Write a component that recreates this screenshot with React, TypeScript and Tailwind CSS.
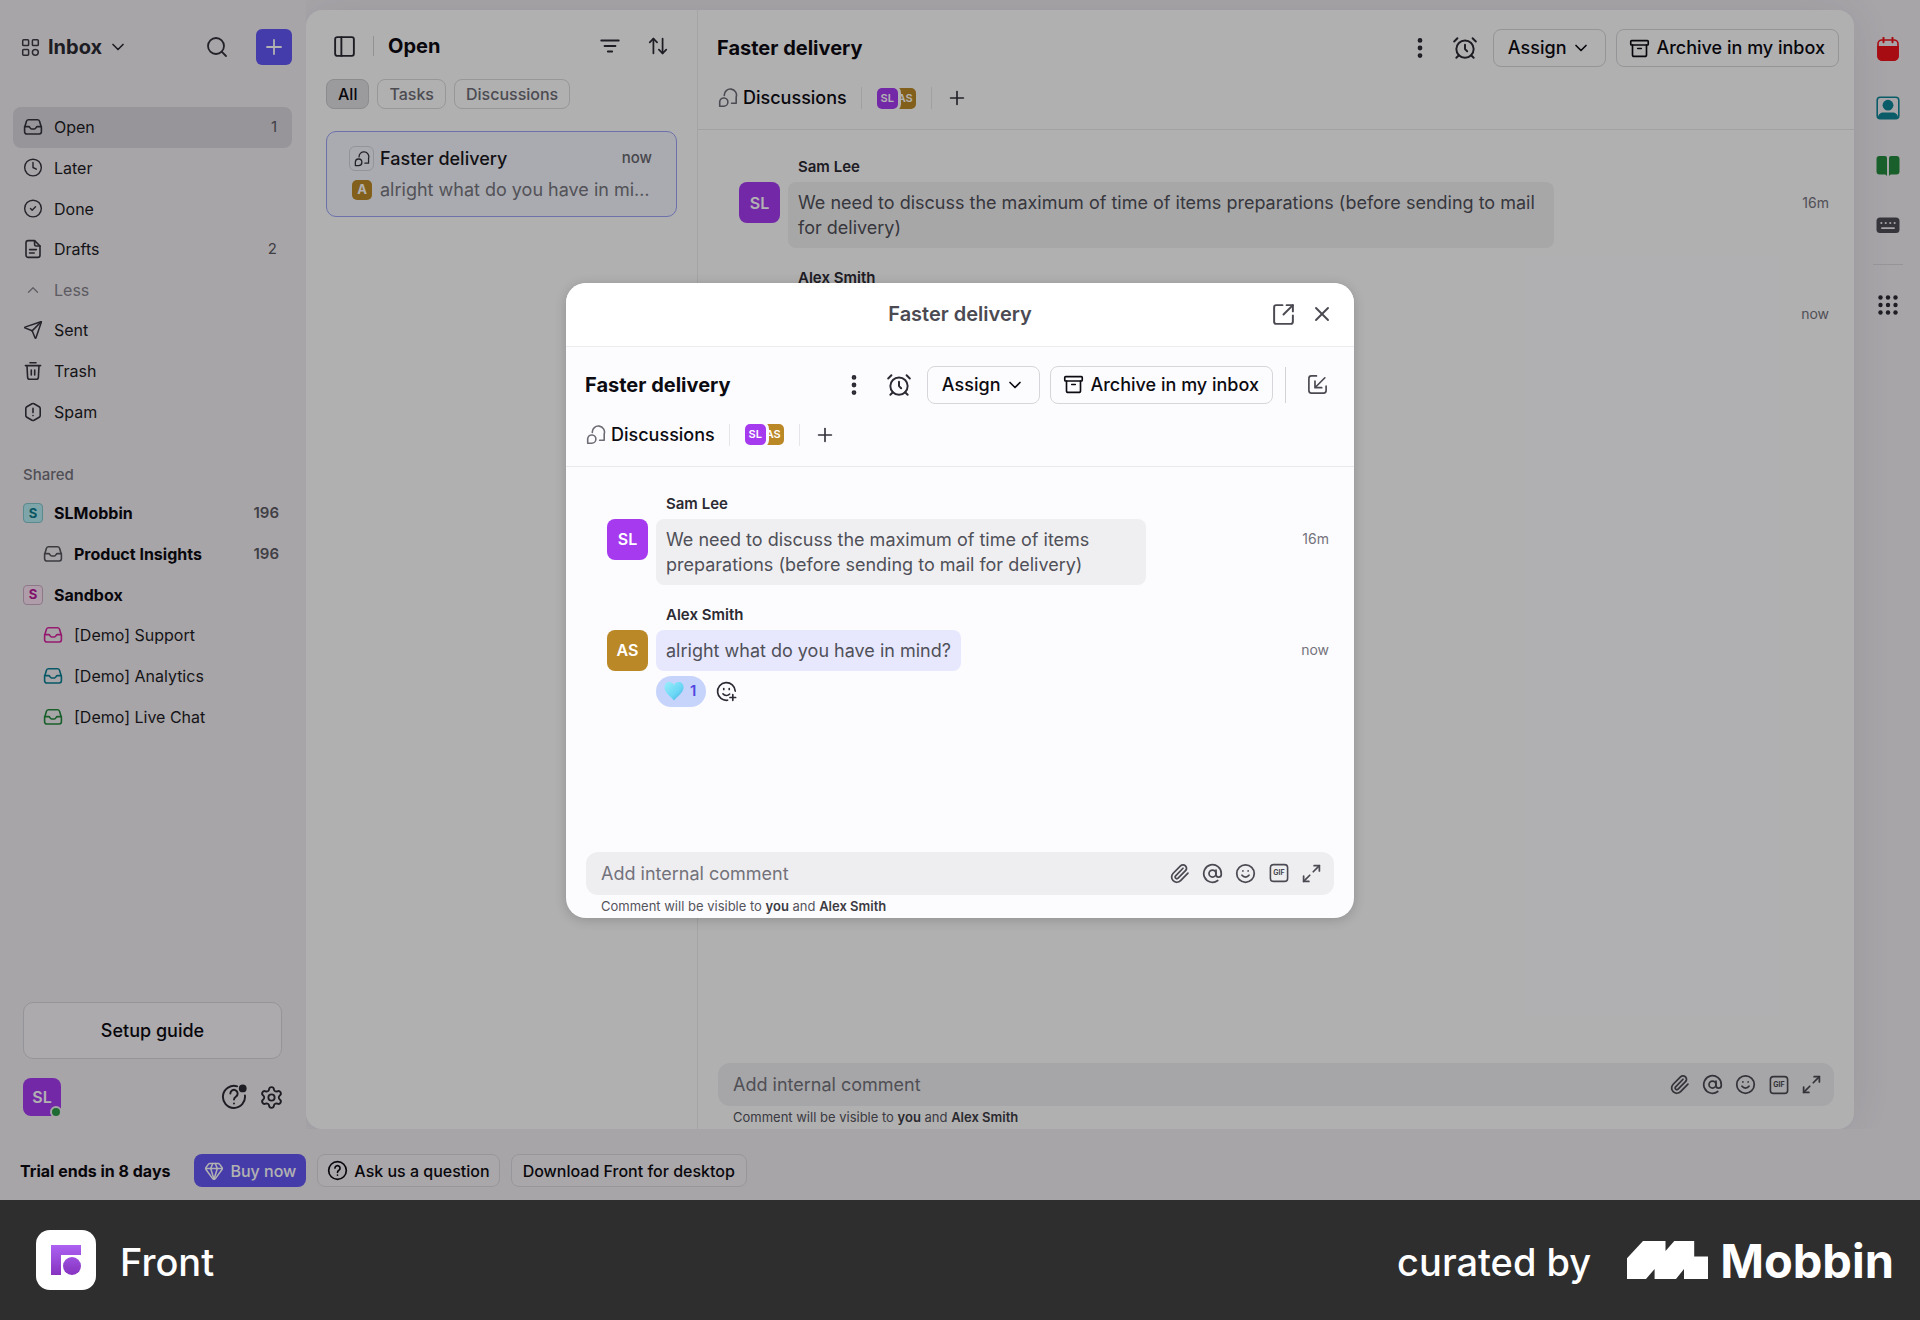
import React, { useId } from "react";
import type { ReactNode } from "react";
import {
  AlarmClock,
  Archive,
  ArrowUpDown,
  AtSign,
  ChevronDown,
  ChevronUp,
  CircleCheck,
  Clock,
  EllipsisVertical,
  Gem,
  Maximize2,
  PanelLeft,
  Paperclip,
  Plus,
  Search,
  Send,
  Settings,
  Smile,
  SquareArrowOutUpRight,
  X,
} from "lucide-react";

type GlyphProps = { size?: number; className?: string; children?: ReactNode };

function Glyph({ size = 20, className = "", children }: GlyphProps) {
  return (
    <svg
      width={size}
      height={size}
      viewBox="0 0 20 20"
      fill="none"
      stroke="currentColor"
      strokeWidth="1.6"
      strokeLinecap="round"
      strokeLinejoin="round"
      aria-hidden="true"
      className={`shrink-0 ${className}`}
    >
      {children}
    </svg>
  );
}

const TrayIcon = (p: GlyphProps) => (
  <Glyph {...p}>
    <path d="M1.6 10.4 3.4 4.5A2.1 2.1 0 0 1 5.400 2.700h9.200a2.100 2.100 0 0 1 2 1.800l1.800 5.900v4.400a2.200 2.200 0 0 1-2.200 2.200H3.800a2.200 2.200 0 0 1-2.200-2.200Z" />
    <path d="M1.6 9.600h4.100c1.300 0 1.200 2.400 2.900 2.400h2.800c1.700 0 1.600-2.400 2.900-2.400h4.100" />
  </Glyph>
);

const DraftIcon = (p: GlyphProps) => (
  <Glyph {...p}>
    <path d="M11.6 1.6H5.2A2.2 2.2 0 0 0 3 3.8v12.4a2.2 2.2 0 0 0 2.2 2.2h9.6a2.2 2.2 0 0 0 2.2-2.2V7Z" />
    <path d="M11.6 1.8v3.6A1.6 1.6 0 0 0 13.2 7H17M6.6 10.6h6.8M6.6 14h4.6" />
  </Glyph>
);

const TrashIcon = (p: GlyphProps) => (
  <Glyph {...p}>
    <path d="M2.4 4.6h15.2M7 1.8h6M4 4.8l.6 11.4a2.2 2.2 0 0 0 2.2 2.1h6.4a2.2 2.2 0 0 0 2.2-2.1L16 4.8M8.3 9v5M11.7 9v5" />
  </Glyph>
);

const SpamIcon = (p: GlyphProps) => (
  <Glyph {...p}>
    <path d="M9 1.8a2 2 0 0 1 2 0l5.2 3a2 2 0 0 1 1 1.7v7a2 2 0 0 1-1 1.7l-5.2 3a2 2 0 0 1-2 0l-5.2-3a2 2 0 0 1-1-1.7v-7a2 2 0 0 1 1-1.7Z" />
    <path d="M10 6.4v4.2M10 13.5v.1" />
  </Glyph>
);

const AppsIcon = (p: GlyphProps) => (
  <Glyph {...p}>
    <rect x="1.8" y="1.8" width="6.2" height="6.2" rx="1" />
    <rect x="12" y="1.8" width="6.2" height="6.2" rx="1" />
    <rect x="1.8" y="12" width="6.2" height="6.2" rx="1" />
    <circle cx="15.1" cy="15.1" r="3.1" />
  </Glyph>
);

const FilterIcon = (p: GlyphProps) => (
  <Glyph {...p}>
    <path d="M2 5h16M5 10h10M8 15h4" />
  </Glyph>
);

const ChatIcon = (p: GlyphProps) => (
  <Glyph {...p}>
    <path d="M6.3 7.4a6.1 6.1 0 1 1 11.9 1.6v6.2h-4.6" />
    <path d="M1.7 18.2v-4.600a4.100 4.100 0 1 1 4.100 4.600Z" />
  </Glyph>
);

const HelpIcon = ({ badge, ...p }: GlyphProps & { badge?: boolean }) => (
  <Glyph {...p}>
    {badge ? (
      <>
        <path d="M12.400 1.800A8.500 8.500 0 1 0 18.400 8.800" strokeWidth="1.5" />
        <circle cx="16.700" cy="3.400" r="3" fill="currentColor" stroke="none" />
        <path d="M7.200 7.300a2.800 2.800 0 1 1 4.400 2.300c-1 .7-1.600 1.200-1.600 2.300M10 14.900v.1" strokeWidth="1.5" />
      </>
    ) : (
      <>
        <circle cx="10" cy="10" r="8.4" />
        <path d="M7.6 7.7a2.4 2.4 0 1 1 3.8 2c-.9.6-1.4 1-1.4 2M10 14.300v.1" />
      </>
    )}
  </Glyph>
);

const PopInIcon = (p: GlyphProps) => (
  <Glyph {...p}>
    <path d="M9 1.800H4.200a2.400 2.400 0 0 0-2.400 2.400v11.600a2.400 2.400 0 0 0 2.400 2.400h11.600a2.400 2.400 0 0 0 2.400-2.400V11.600" />
    <path d="M17 3.600 8 12.600M7.600 6.800V13H14" />
  </Glyph>
);

const GifIcon = (p: GlyphProps) => (
  <Glyph {...p}>
    <rect x="1.4" y="1.6" width="17.2" height="16.8" rx="3" />
    <text
      x="10"
      y="12.4"
      textAnchor="middle"
      fontSize="7"
      fontWeight="700"
      fill="currentColor"
      stroke="none"
    >
      GIF
    </text>
  </Glyph>
);

const AddReactionIcon = (p: GlyphProps) => (
  <Glyph {...p}>
    <path d="M18.3 9.6A8.4 8.4 0 1 0 11 18.3" />
    <path d="M6.6 12.2a4.2 4.2 0 0 0 6.4.2M7.4 7.2v.9M12.6 7.2v.9M16 13v5.4M13.3 15.7h5.4" />
  </Glyph>
);

function HeartIcon() {
  const id = useId();
  return (
    <svg width="20" height="20" viewBox="0 0 20 20" aria-hidden="true" className="shrink-0">
      <defs>
        <linearGradient id={id} x1="0" y1="0" x2="1" y2="1">
          <stop offset="0" stopColor="#9aeefb" />
          <stop offset="0.6" stopColor="#6ad6f5" />
          <stop offset="1" stopColor="#3fa9dc" />
        </linearGradient>
      </defs>
      <path
        d="M10 19.400C7.400 16 .4 12 .4 6.200.4 3 2.600 1 5.200 1c2 0 3.900 1.200 4.800 3.100C10.900 2.200 12.800 1 14.800 1c2.600 0 4.800 2 4.800 5.200 0 5.800-7 9.800-9.600 13.200Z"
        fill={`url(#${id})`}
      />
    </svg>
  );
}

type Tone = "purple" | "gold";
const tones: Record<Tone, string> = { purple: "bg-[#a53aef]", gold: "bg-[#bb8828]" };

const iconButton = "flex shrink-0 items-center justify-center";

type NavRow = { label: string; icon: ReactNode; count?: number; active?: boolean; muted?: boolean };

const mailRows: NavRow[] = [
  { label: "Open", icon: <TrayIcon />, count: 1, active: true },
  { label: "Later", icon: <Clock size={21} strokeWidth={1.7} /> },
  { label: "Done", icon: <CircleCheck size={21} strokeWidth={1.7} /> },
  { label: "Drafts", icon: <DraftIcon />, count: 2 },
  { label: "Less", icon: <ChevronUp size={18} strokeWidth={1.8} />, muted: true },
  { label: "Sent", icon: <Send size={20} strokeWidth={1.8} /> },
  { label: "Trash", icon: <TrashIcon /> },
  { label: "Spam", icon: <SpamIcon /> },
];

type SharedRow = {
  label: string;
  badge?: string;
  tray?: string;
  count?: number;
  bold?: boolean;
};

const sharedRows: SharedRow[] = [
  { label: "SLMobbin", badge: "border-[#82c4cc] bg-[#b5ecf2] text-[#0f7c8c]", count: 196, bold: true },
  { label: "Product Insights", tray: "text-[#55555c]", count: 196, bold: true },
  { label: "Sandbox", badge: "border-[#c9adc3] bg-[#fbe3f4] text-[#b8189a]", bold: true },
  { label: "[Demo] Support", tray: "text-[#d6249f]" },
  { label: "[Demo] Analytics", tray: "text-[#0b7f94]" },
  { label: "[Demo] Live Chat", tray: "text-[#23883c]" },
];

function Sidebar() {
  return (
    <aside className="relative z-10 flex w-[306px] shrink-0 flex-col bg-[#f0edf1] pr-[14px] pl-[13px]">
      <header className="flex h-[94px] items-center">
        <button type="button" className="flex items-center pl-2">
          <AppsIcon size={19} className="text-[#3f3d46]" />
          <span className="ml-2 text-xl font-bold text-[#2c2a33]">Inbox</span>
          <ChevronDown size={20} strokeWidth={2} className="ml-1.5 text-[#2c2a33]" />
        </button>
        <button type="button" aria-label="Search" className={`${iconButton} ml-auto size-9`}>
          <Search size={24} strokeWidth={1.8} className="text-[#33313a]" />
        </button>
        <button
          type="button"
          aria-label="Compose"
          className={`${iconButton} ml-[21px] size-9 rounded-md bg-[#6457f5] text-white`}
        >
          <Plus size={24} strokeWidth={1.8} />
        </button>
      </header>

      <nav aria-label="Mailboxes" className="mt-[13px]">
        <ul className="grid h-[325px] grid-rows-8">
          {mailRows.map((row) => (
            <li key={row.label} className="flex">
              <a
                href="#"
                className={`flex w-full items-center rounded-lg pr-[15px] pl-2.5 ${row.active ? "bg-[#d8d6dd]" : ""}`}
              >
                <span
                  className={`flex w-5 justify-center ${row.muted ? "text-[#8b8992]" : "text-[#36343d]"}`}
                >
                  {row.icon}
                </span>
                <span
                  className={`ml-[11px] text-base ${row.muted ? "text-[#85838c]" : "text-[#1e1c24]"}`}
                >
                  {row.label}
                </span>
                {row.count !== undefined && (
                  <span className="ml-auto text-[15px] text-[#5c5a63]">{row.count}</span>
                )}
              </a>
            </li>
          ))}
        </ul>
      </nav>

      <h2 className="mt-[33px] pl-2.5 text-[15px] leading-5 font-medium text-[#74727b]">Shared</h2>
      <nav aria-label="Shared" className="mt-2">
        <ul className="grid h-[244px] grid-rows-6">
          {sharedRows.map((row) => (
            <li key={row.label} className="flex">
              <a
                href="#"
                className={`flex w-full items-center pr-[13px] ${row.tray ? "pl-[30px]" : "pl-2.5"}`}
              >
                {row.badge && (
                  <span
                    className={`flex size-5 items-center justify-center rounded border text-[13px] font-bold ${row.badge}`}
                  >
                    S
                  </span>
                )}
                {row.tray && <TrayIcon className={row.tray} />}
                <span
                  className={`ml-[11px] text-base ${row.bold ? "font-bold text-[#0d0b12]" : "text-[#1e1c24]"}`}
                >
                  {row.label}
                </span>
                {row.count !== undefined && (
                  <span className="ml-auto text-[15px] font-semibold text-[#5c5a63]">{row.count}</span>
                )}
              </a>
            </li>
          ))}
        </ul>
      </nav>

      <div className="mt-auto mr-2.5 mb-[13px] ml-2.5">
        <button
          type="button"
          className="h-[57px] w-full rounded-[10px] border border-[#d6d4da] bg-[#f6f4f8] text-lg font-medium text-[#0d0b12]"
        >
          Setup guide
        </button>
        <div className="mt-[19px] flex items-center">
          <button
            type="button"
            className="relative flex size-[38px] items-center justify-center rounded-lg bg-[#a53aef] text-base font-semibold text-white"
          >
            SL
            <span className="absolute -right-px -bottom-0.5 size-3 rounded-full border-2 border-[#f0edf1] bg-[#2c9a4b]" />
          </button>
          <button type="button" aria-label="Help" className={`${iconButton} ml-auto`}>
            <HelpIcon badge size={26} className="text-[#2c2a33]" />
          </button>
          <button type="button" aria-label="Settings" className={`${iconButton} ml-3 -mr-0.5`}>
            <Settings size={25} strokeWidth={1.8} className="text-[#2c2a33]" />
          </button>
        </div>
      </div>
    </aside>
  );
}

function ConversationList() {
  return (
    <section
      aria-label="Open conversations"
      className="w-[392px] shrink-0 border-r border-[#ebebee] pr-5 pl-5"
    >
      <header className="flex h-[72px] items-center">
        <button type="button" aria-label="Toggle sidebar" className={`${iconButton} ml-1.5`}>
          <PanelLeft size={25} strokeWidth={1.8} className="text-[#2c2a33]" />
        </button>
        <span className="ml-4 h-5 w-px bg-[#d2d2d6]" />
        <h1 className="ml-[14px] text-xl font-bold text-[#0d0b12]">Open</h1>
        <button type="button" aria-label="Filter" className={`${iconButton} ml-auto`}>
          <FilterIcon size={22} className="text-[#2c2a33]" />
        </button>
        <button type="button" aria-label="Sort" className={`${iconButton} mr-2 ml-[26px]`}>
          <ArrowUpDown size={22} strokeWidth={1.9} className="text-[#2c2a33]" />
        </button>
      </header>

      <div className="-mt-[3px] flex gap-2">
        <button
          type="button"
          className="h-[30px] rounded-lg border border-[#c9c9cd] bg-[#dedee1] px-[11px] text-base font-medium text-[#0d0b12]"
        >
          All
        </button>
        {["Tasks", "Discussions"].map((label) => (
          <button
            key={label}
            type="button"
            className="h-[30px] rounded-lg border border-[#d8d8dc] px-[11px] text-base font-medium text-[#6d6c74]"
          >
            {label}
          </button>
        ))}
      </div>

      <a
        href="#"
        className="mt-[22px] block h-[86px] rounded-[10px] border border-[#9ba3f7] bg-[#f3f5fc] pt-[14px] pr-6 pl-[22px]"
      >
        <span className="flex h-[25px] items-center">
          <span className="flex size-[25px] items-center justify-center rounded-md border border-[#d2d4da]">
            <ChatIcon size={16} className="text-[#33313a]" />
          </span>
          <span className="ml-1.5 text-lg font-medium text-[#1a1820]">Faster delivery</span>
          <span className="ml-auto text-[15px] font-medium text-[#67666e]">now</span>
        </span>
        <span className="mt-[6px] flex h-[25px] items-center pl-[3px]">
          <span className="flex size-5 shrink-0 items-center justify-center rounded-[5px] bg-[#bb8828] text-[13px] font-bold text-white">
            A
          </span>
          <span className="ml-2 flex-1 truncate text-lg leading-[25px] text-[#77767e]">
            alright what do you have in mind?
          </span>
        </span>
      </a>
    </section>
  );
}

const outlineButton =
  "flex h-[38px] items-center rounded-lg border border-[#d6d6da] text-lg font-medium text-[#0d0b12]";

function MiniAvatar({ tone, name, front }: { tone: Tone; name: string; front?: boolean }) {
  return (
    <span
      className={`flex size-[21px] items-center justify-center rounded-[5px] text-[11px] font-semibold text-white ${tones[tone]} ${front ? "relative z-10 ring-[3px] ring-[#fcfcfe]" : "-ml-[3px]"}`}
    >
      {name}
    </span>
  );
}

type Message = {
  author: string;
  initials: string;
  tone: Tone;
  bubble: string;
  text: string;
  time: string;
  reaction?: number;
};

const messages: Message[] = [
  {
    author: "Sam Lee",
    initials: "SL",
    tone: "purple",
    bubble: "bg-[#efeff1]",
    text: "We need to discuss the maximum of time of items preparations (before sending to mail for delivery)",
    time: "16m",
  },
  {
    author: "Alex Smith",
    initials: "AS",
    tone: "gold",
    bubble: "bg-[#e7e8fe]",
    text: "alright what do you have in mind?",
    time: "now",
    reaction: 1,
  },
];

function Conversation({ floating }: { floating?: boolean }) {
  return (
    <article className="flex min-w-0 flex-1 flex-col">
      <header className="h-[120px] shrink-0 border-b border-[#e9e9ec] pt-[19px]">
        <div
          className={`flex h-[38px] items-center pl-[19px] ${floating ? "pr-[26px]" : "pr-[15px]"}`}
        >
          <h2 className="mr-auto text-xl font-bold text-[#0d0b12]">Faster delivery</h2>
          <button type="button" aria-label="More" className={iconButton}>
            <EllipsisVertical size={26} strokeWidth={2.4} className="text-[#2c2a33]" />
          </button>
          <button type="button" aria-label="Snooze" className={`${iconButton} ml-[19px]`}>
            <AlarmClock size={26} strokeWidth={1.8} className="text-[#2c2a33]" />
          </button>
          <button type="button" className={`${outlineButton} ml-[15px] px-[14px]`}>
            Assign
            <ChevronDown size={20} strokeWidth={2} className="ml-[5px]" />
          </button>
          <button type="button" className={`${outlineButton} ml-2.5 pr-[13px] pl-3`}>
            <Archive size={21} strokeWidth={1.9} className="mr-[6px]" />
            Archive in my inbox
          </button>
          {floating && (
            <>
              <span className="ml-3 h-9 w-px bg-[#d2d2d6]" />
              <button type="button" aria-label="Dock window" className={`${iconButton} ml-[21px]`}>
                <PopInIcon size={21} className="text-[#4b4a52]" />
              </button>
            </>
          )}
        </div>
        <div className="mt-5 flex h-[22px] items-center pl-5">
          <ChatIcon className="text-[#6d6c74]" />
          <span className="ml-[5px] text-lg font-medium text-[#0d0b12]">Discussions</span>
          <span className="ml-[14px] h-[22px] w-px bg-[#e6e6ea]" />
          <span className="ml-[15px] flex">
            <MiniAvatar tone="purple" name="SL" front />
            <MiniAvatar tone="gold" name="AS" />
          </span>
          <span className="ml-[15px] h-[22px] w-px bg-[#e6e6ea]" />
          <button type="button" aria-label="Add participant" className={`${iconButton} ml-[14px]`}>
            <Plus size={22} strokeWidth={1.8} className="text-[#33313a]" />
          </button>
        </div>
      </header>

      <ol className="flex flex-1 flex-col gap-5 pt-[27px] pr-[25px] pl-[41px]">
        {messages.map((m) => (
          <li key={m.author}>
            <p className="pl-[59px] text-[15px] leading-5 font-semibold text-[#2c2a33]">{m.author}</p>
            <div className="mt-[5px] flex">
              <span
                className={`flex size-[41px] shrink-0 items-center justify-center rounded-lg text-base font-semibold text-white ${tones[m.tone]}`}
              >
                {m.initials}
              </span>
              <div className="ml-2 flex-1">
                <p
                  className={`w-fit max-w-3/4 rounded-lg px-2.5 py-2 text-lg leading-[25px] text-[#505058] ${m.bubble}`}
                >
                  {m.text}
                </p>
                {floating && m.reaction && (
                  <div className="mt-[5px] flex items-center">
                    <button
                      type="button"
                      className="flex h-[31px] items-center rounded-full bg-[#c6d3fb] pr-2.5 pl-2 text-[15px] font-semibold text-[#5146e0]"
                    >
                      <HeartIcon />
                      <span className="ml-1.5">{m.reaction}</span>
                    </button>
                    <button type="button" aria-label="Add reaction" className={`${iconButton} ml-2.5`}>
                      <AddReactionIcon size={21} className="text-[#2c2a33]" />
                    </button>
                  </div>
                )}
              </div>
              <time className="flex h-[41px] w-5 items-center justify-end text-sm whitespace-nowrap text-[#74727b]">
                {m.time}
              </time>
            </div>
          </li>
        ))}
      </ol>

      <div className="px-5">
        <div className="flex h-[43px] items-center rounded-xl bg-[#eeeef1] pr-3 pl-[15px] text-[#4b4a52]">
          <input
            type="text"
            aria-label="Add internal comment"
            placeholder="Add internal comment"
            className="h-[43px] min-w-0 flex-1 bg-transparent text-lg text-[#2c2a33] outline-none placeholder:text-[#73727a]"
          />
          <div className="flex gap-3">
            <button type="button" aria-label="Attach file" className={iconButton}>
              <Paperclip size={21} strokeWidth={2} />
            </button>
            <button type="button" aria-label="Mention" className={iconButton}>
              <AtSign size={21} strokeWidth={2} />
            </button>
            <button type="button" aria-label="Emoji" className={iconButton}>
              <Smile size={21} strokeWidth={2} />
            </button>
            <button type="button" aria-label="Insert GIF" className={`${iconButton} w-[21px]`}>
              <GifIcon size={20} />
            </button>
            <button type="button" aria-label="Expand" className={iconButton}>
              <Maximize2 size={21} strokeWidth={2} />
            </button>
          </div>
        </div>
        <p className="pl-[15px] text-[13px] leading-[23px] text-[#55545c]">
          Comment will be visible to <strong className="font-semibold text-[#3c3b43]">you</strong> and{" "}
          <strong className="font-semibold text-[#3c3b43]">Alex Smith</strong>
        </p>
      </div>
    </article>
  );
}

function AppRail() {
  return (
    <nav aria-label="Apps" className="flex w-[66px] shrink-0 flex-col items-center pt-[37px] pl-0.5">
      <button type="button" aria-label="Calendar" className="h-6">
        <svg width="24" height="24" viewBox="0 0 24 24" className="text-[#ee1219]" aria-hidden="true">
          <rect x="2" y="3" width="20" height="20" rx="4" fill="none" stroke="currentColor" strokeWidth="1.6" />
          <path d="M1.2 9h21.6v10a5 5 0 0 1-5 5H6.2a5 5 0 0 1-5-5Z" fill="currentColor" />
          <path d="M7.5.8v4.4M16.5.8v4.4" stroke="currentColor" strokeWidth="2" strokeLinecap="round" />
        </svg>
      </button>
      <button type="button" aria-label="Contacts" className="mt-[35px] h-6">
        <svg width="24" height="24" viewBox="0 0 24 24" className="text-[#0e8596]" aria-hidden="true">
          <rect x="1.2" y="1.2" width="21.6" height="21.6" rx="3" fill="#f0edf1" stroke="currentColor" strokeWidth="1.6" />
          <circle cx="12" cy="9.2" r="5.4" fill="currentColor" />
          <path d="M2 21.5c0-3 2.500-5 5.500-5h9c3 0 5.500 2 5.500 5v1H2Z" fill="currentColor" />
        </svg>
      </button>
      <button type="button" aria-label="Knowledge base" className="mt-[34px] h-6">
        <svg width="24" height="24" viewBox="0 0 24 24" className="text-[#25893e]" aria-hidden="true">
          <path
            d="M3.5 2H9a2 2 0 0 1 2 2v18c-.6-1-1.3-1.6-2.5-1.6h-5a3 3 0 0 1-3-3V5a3 3 0 0 1 3-3ZM20.500 2H15a2 2 0 0 0-2 2v18c.6-1 1.300-1.600 2.500-1.600h5a3 3 0 0 0 3-3V5a3 3 0 0 0-3-3Z"
            fill="currentColor"
          />
        </svg>
      </button>
      <button type="button" aria-label="Shortcuts" className="mt-[35px] h-6">
        <svg width="24" height="24" viewBox="0 0 24 24" className="text-[#4f4d56]" aria-hidden="true">
          <rect x=".5" y="4.5" width="23" height="15.5" rx="3.5" fill="currentColor" />
          <path
            d="M5.3 10h.1M9.7 10h.1M14.2 10h.1M18.6 10h.1"
            stroke="#f0edf1"
            strokeWidth="2"
            strokeLinecap="round"
          />
          <path d="M6 15.2h12" stroke="#f0edf1" strokeWidth="1.8" strokeLinecap="round" />
        </svg>
      </button>
      <span className="mt-[27px] h-px w-[30px] bg-[#d6d4da]" />
      <button type="button" aria-label="All apps" className="mt-7 h-6">
        <svg width="24" height="24" viewBox="0 0 24 24" className="text-[#2c2a33]" aria-hidden="true">
          {[4.5, 12, 19.5].map((y) =>
            [4.5, 12, 19.5].map((x) => <circle key={`${x}-${y}`} cx={x} cy={y} r="2.2" fill="currentColor" />),
          )}
        </svg>
      </button>
    </nav>
  );
}

function TrialBar() {
  const chip =
    "flex h-[33px] items-center rounded-lg border border-[#d9d7dd] bg-[#f3f0f4] text-base font-medium text-[#0d0b12]";
  return (
    <div className="flex h-[71px] items-center bg-[#f0edf1] pt-3 pl-5">
      <p className="text-base font-bold text-[#0d0b12]">Trial ends in 8 days</p>
      <button
        type="button"
        className="ml-6 flex h-[33px] items-center rounded-lg bg-[#6457f2] px-2.5 text-base font-medium text-white"
      >
        <Gem size={20} strokeWidth={1.8} className="mr-1.5" />
        Buy now
      </button>
      <button type="button" className={`${chip} ml-[11px] px-[9px]`}>
        <HelpIcon size={21} className="mr-1.5" />
        Ask us a question
      </button>
      <button type="button" className={`${chip} ml-[11px] px-[11px]`}>
        Download Front for desktop
      </button>
    </div>
  );
}

function DiscussionDialog() {
  return (
    <div
      role="dialog"
      aria-modal="true"
      aria-label="Faster delivery"
      className="flex h-[635px] w-[788px] max-w-full flex-col overflow-hidden rounded-[20px] bg-[#fcfcfe] shadow-[0_2px_12px_rgba(0,0,0,0.18)]"
    >
      <div className="flex h-16 shrink-0 items-center border-b border-[#ededf0] bg-white px-5 text-[#4b4a52]">
        <span className="flex-1" />
        <h2 className="text-xl font-semibold">Faster delivery</h2>
        <div className="flex flex-1 items-center justify-end gap-[14px]">
          <button type="button" aria-label="Open in new window" className={iconButton}>
            <SquareArrowOutUpRight size={25} strokeWidth={1.9} />
          </button>
          <button type="button" aria-label="Close" className={iconButton}>
            <X size={24} strokeWidth={1.9} />
          </button>
        </div>
      </div>
      <Conversation floating />
    </div>
  );
}

function Footer() {
  return (
    <footer className="flex h-[120px] items-center bg-[#2e2e2e] pr-[26px] pl-9 text-white">
      <span className="flex size-[60px] items-center justify-center rounded-[14px] bg-white">
        <svg width="30" height="30" viewBox="0 0 30 30" aria-hidden="true">
          <defs>
            <linearGradient id="front-mark" x1="0" y1="0" x2="0" y2="1">
              <stop offset="0" stopColor="#ad62f2" />
              <stop offset="1" stopColor="#8633c0" />
            </linearGradient>
            <mask id="front-cut">
              <rect width="30" height="30" fill="#fff" />
              <path d="M10 30V10H30V30Z" fill="#000" />
              <circle cx="21" cy="21" r="9" fill="#fff" />
            </mask>
          </defs>
          <rect width="30" height="30" fill="url(#front-mark)" mask="url(#front-cut)" />
        </svg>
      </span>
      <span className="ml-6 pt-1 text-[38px] font-medium">Front</span>
      <span className="ml-auto pt-1 text-[38px] font-medium">curated by</span>
      <span className="ml-9 flex items-center">
        <svg width="81" height="38" viewBox="0 0 81 38" fill="currentColor" aria-hidden="true">
          <path d="M0 17.3 16 0h22.5v10L47.3 0h19.9v15.5H81V38H57V28l-8 10H27.6V28L19 38H0Z" />
        </svg>
        <span className="ml-3 text-[47px] leading-none font-bold">Mobbin</span>
      </span>
    </footer>
  );
}

export default function App() {
  return (
    <div className="flex min-h-screen flex-col font-[Inter,sans-serif]">
      <div className="relative flex flex-1 flex-col bg-[#f0edf1]">
        <div className="flex flex-1">
          <Sidebar />
          <main className="mt-2.5 flex min-w-0 flex-1 rounded-2xl bg-[#fcfcfe] shadow-[0_0_48px_rgba(60,62,80,0.10)]">
            <ConversationList />
            <Conversation />
          </main>
          <AppRail />
        </div>
        <TrialBar />
        <div className="absolute inset-0 z-20 flex items-center justify-center bg-black/30">
          <DiscussionDialog />
        </div>
      </div>
      <Footer />
    </div>
  );
}
